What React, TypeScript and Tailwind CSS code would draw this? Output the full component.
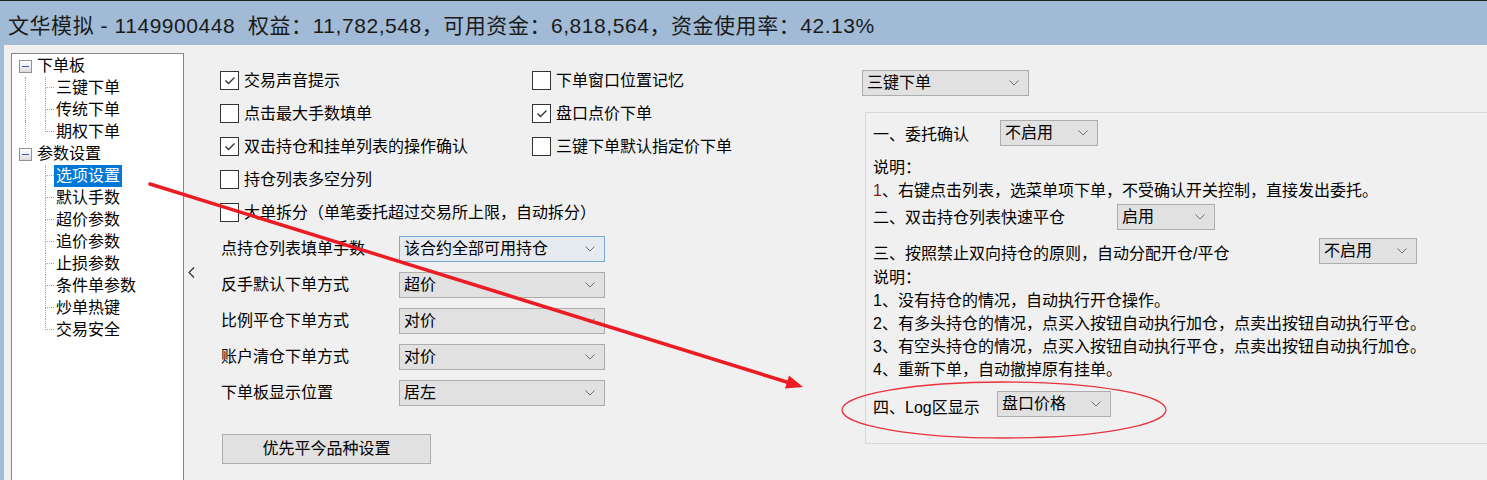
import React from "react";

const Chevron = () => (
  <svg width="10" height="6" viewBox="0 0 10 6" className="shrink-0">
    <path d="M0.5 0.5 L5 5 L9.5 0.5" fill="none" stroke="#707070" strokeWidth="1" />
  </svg>
);

const Select = ({
  value,
  className = "",
  focused = false,
}: {
  value: string;
  className?: string;
  focused?: boolean;
}) => (
  <div
    className={`flex h-[26px] shrink-0 items-center justify-between border pl-[4px] pr-[9px] ${
      focused ? "border-[#7aa7d6] bg-[#e5ebf1]" : "border-[#adadad] bg-[#e1e1e1]"
    } ${className}`}
  >
    <span className="leading-none">{value}</span>
    <Chevron />
  </div>
);

const Check = ({
  checked = false,
  label,
  className = "",
}: {
  checked?: boolean;
  label: string;
  className?: string;
}) => (
  <div className={`flex h-[33px] items-center ${className}`}>
    <div className="flex h-[19px] w-[19px] shrink-0 items-center justify-center border border-[#333] bg-white">
      {checked && (
        <svg width="12" height="9" viewBox="0 0 12 9">
          <path d="M1.5 4.5 L4.5 7.5 L10.5 1.5" fill="none" stroke="#333" strokeWidth="1.4" />
        </svg>
      )}
    </div>
    <span className="ml-[5px] whitespace-nowrap leading-none">{label}</span>
  </div>
);

const ExpandBox = () => (
  <div className="flex h-[13px] w-[13px] shrink-0 items-center justify-center border border-[#919191] bg-gradient-to-b from-white to-[#dcdcdc]">
    <div className="h-[1px] w-[7px] bg-[#3b5fae]" />
  </div>
);

const RootRow = ({ label }: { label: string }) => (
  <div className="flex h-[22px] items-center pl-[7px]">
    <ExpandBox />
    <span className="ml-[3px] px-[2px] leading-[22px]">{label}</span>
  </div>
);

const ChildRow = ({
  label,
  last = false,
  rootLine = false,
  selected = false,
}: {
  label: string;
  last?: boolean;
  rootLine?: boolean;
  selected?: boolean;
}) => (
  <div className="flex h-[22px] items-stretch">
    <div className="ml-[7px] flex w-[13px] justify-center">
      {rootLine && <div className="h-full w-0 border-l border-dotted border-[#a0a0a0]" />}
    </div>
    <div className="ml-[13px] flex w-[9px] flex-col">
      <div className="h-[11px] border-b border-l border-dotted border-[#a0a0a0]" />
      {!last && <div className="h-[11px] border-l border-dotted border-[#a0a0a0]" />}
    </div>
    <span
      className={`px-[2px] leading-[22px] ${selected ? "bg-[#0078d7] text-white" : ""}`}
    >
      {label}
    </span>
  </div>
);

const Line = ({ children }: { children: React.ReactNode }) => (
  <div className="h-[23px] whitespace-nowrap leading-[23px]">{children}</div>
);

export default function App() {
  return (
    <div className="relative h-[480px] w-[1487px] overflow-hidden bg-[#f0f0f0] font-['Liberation_Sans','Noto_Sans_CJK_SC',sans-serif] text-[16px] text-black">
      <div className="flex h-[45px] items-center whitespace-pre border-t border-[#222] bg-[#a1bad6] pl-[8px] pt-[5px] text-[21px] tracking-[0.55px] text-[#1a1a1a]">
        文华模拟 - 1149900448  权益：11,782,548，可用资金：6,818,564，资金使用率：42.13%
      </div>

      <div className="flex h-[435px] border-l-[4px] border-[#a1bad6]">
        {/* tree */}
        <div className="ml-[7px] mt-[8px] h-[440px] w-[173px] shrink-0 border border-[#828790] bg-white pt-[1px]">
          <RootRow label="下单板" />
          <ChildRow label="三键下单" rootLine />
          <ChildRow label="传统下单" rootLine />
          <ChildRow label="期权下单" rootLine last />
          <RootRow label="参数设置" />
          <ChildRow label="选项设置" selected />
          <ChildRow label="默认手数" />
          <ChildRow label="超价参数" />
          <ChildRow label="追价参数" />
          <ChildRow label="止损参数" />
          <ChildRow label="条件单参数" />
          <ChildRow label="炒单热键" />
          <ChildRow label="交易安全" last />
        </div>

        {/* collapse handle */}
        <div className="w-[36px] shrink-0 pl-[4px] pt-[222px]">
          <svg width="7" height="11" viewBox="0 0 7 11">
            <path d="M6 0.5 L1 5.5 L6 10.5" fill="none" stroke="#333" strokeWidth="1.2" />
          </svg>
        </div>

        {/* middle options */}
        <div className="w-[642px] shrink-0 pt-[19px]">
          <div className="grid grid-cols-[312px_1fr]">
            <Check checked label="交易声音提示" />
            <Check label="下单窗口位置记忆" />
            <Check label="点击最大手数填单" />
            <Check checked label="盘口点价下单" />
            <Check checked label="双击持仓和挂单列表的操作确认" />
            <Check label="三键下单默认指定价下单" />
            <Check label="持仓列表多空分列" className="col-span-2" />
            <Check label="大单拆分（单笔委托超过交易所上限，自动拆分）" className="col-span-2" />
          </div>

          <div className="mt-[2px]">
            {[
              ["点持仓列表填单手数", "该合约全部可用持仓"],
              ["反手默认下单方式", "超价"],
              ["比例平仓下单方式", "对价"],
              ["账户清仓下单方式", "对价"],
              ["下单板显示位置", "居左"],
            ].map(([label, value], i) => (
              <div key={label} className="flex h-[36px] items-center">
                <span className="w-[179px] pl-[1px] leading-none">{label}</span>
                <Select value={value} focused={i === 0} className="w-[206px]" />
              </div>
            ))}
          </div>

          <div className="ml-[2px] mt-[23px] flex h-[30px] w-[209px] items-center justify-center border border-[#adadad] bg-[#e1e1e1]">
            优先平今品种设置
          </div>
        </div>

        {/* right panel */}
        <div className="flex-1 pt-[25px]">
          <Select value="三键下单" className="w-[167px]" />
          <div className="ml-[3px] mt-[16px] h-[332px] w-[640px] border border-[#d8d8d8] pl-[7px] pt-[7px]">
            <div className="flex h-[26px] items-center">
              <span className="w-[127px] pt-[4px] leading-none">一、委托确认</span>
              <Select value="不启用" className="w-[98px]" />
            </div>
            <div className="mt-[10px]">
              <Line>说明：</Line>
              <Line>
                <span className="text-[#8b1a1a]">1</span>、右键点击列表，选菜单项下单，不受确认开关控制，直接发出委托。
              </Line>
            </div>
            <div className="mt-[2px] flex h-[26px] items-center">
              <span className="w-[244px] pt-[2px] leading-none">二、双击持仓列表快速平仓</span>
              <Select value="启用" className="w-[98px]" />
            </div>
            <div className="mt-[8px] flex h-[26px] items-center">
              <span className="w-[446px] pt-[5px] leading-none">三、按照禁止双向持仓的原则，自动分配开仓/平仓</span>
              <Select value="不启用" className="w-[98px]" />
            </div>
            <div className="mt-[2px]">
              <Line>说明：</Line>
              <Line>1、没有持仓的情况，自动执行开仓操作。</Line>
              <Line>2、有多头持仓的情况，点买入按钮自动执行加仓，点卖出按钮自动执行平仓。</Line>
              <Line>3、有空头持仓的情况，点买入按钮自动执行平仓，点卖出按钮自动执行加仓。</Line>
              <Line>4、重新下单，自动撤掉原有挂单。</Line>
            </div>
            <div className="mt-[10px] flex h-[26px] items-center">
              <span className="w-[124px] pt-[8px] leading-none">四、Log区显示</span>
              <Select value="盘口价格" className="w-[114px]" />
            </div>
          </div>
        </div>
      </div>

      {/* red annotation overlay */}
      <svg
        className="pointer-events-none absolute left-0 top-0"
        width="1487"
        height="480"
        viewBox="0 0 1487 480"
      >
        <line x1="150" y1="184" x2="790" y2="383" stroke="#ec1c24" strokeWidth="3.5" strokeLinecap="round" />
        <polygon points="803,387 785,388.5 789,375.5" fill="#ec1c24" />
        <ellipse cx="1004" cy="410" rx="162" ry="28" fill="none" stroke="#e8323c" strokeWidth="1.3" />
      </svg>
    </div>
  );
}
